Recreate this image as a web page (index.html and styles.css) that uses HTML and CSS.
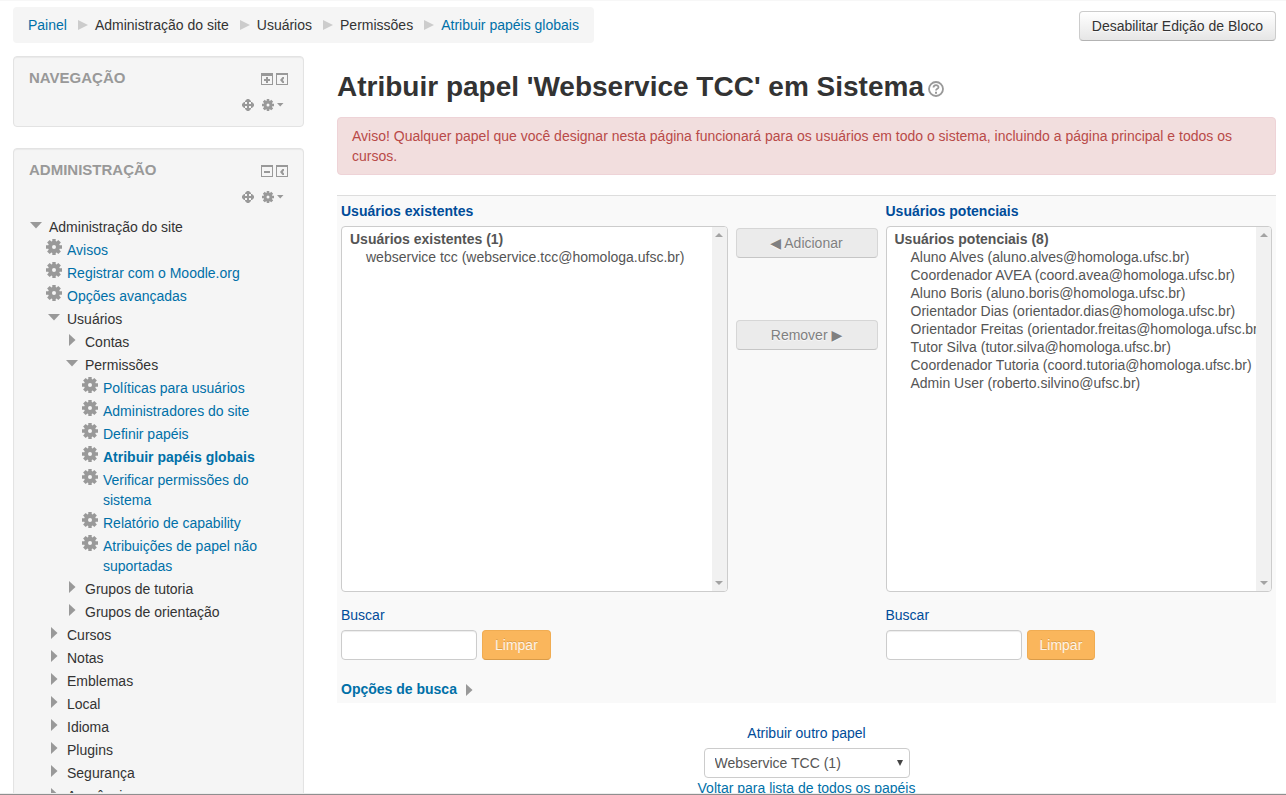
FILE: index.html
```html
<!DOCTYPE html>
<html lang="pt-br">
<head>
<meta charset="utf-8">
<title>Atribuir papéis globais</title>
<link rel="stylesheet" href="styles.css">
</head>
<body>
<svg class="sprite" aria-hidden="true">
  <symbol id="gear" viewBox="0 0 16 16"><path fill-rule="evenodd" d="M6.300 0h3.400v2.100l.9.400 1.700-1.500 2.600 2.500-1.600 1.700.4 1H16v3.600h-2.300l-.4 1 1.600 1.700-2.600 2.500-1.700-1.500-.9.400V16H6.300v-2.100l-.9-.4L3.700 15l-2.600-2.500 1.600-1.700-.4-1H0V6.200h2.300l.4-1L1.100 3.500 3.700 1l1.700 1.500.9-.4zM8 6a2 2 0 1 0 0 4a2 2 0 1 0 0-4z"/></symbol>
  <symbol id="down" viewBox="0 0 16 16"><path d="M2 6h12L8 12.500z"/></symbol>
  <symbol id="right" viewBox="0 0 16 16"><path d="M5 3l6.500 6L5 15z"/></symbol>
  <symbol id="move" viewBox="0 0 12 12"><path d="M5 0h2l2 2v1H7v2h2V3h1l2 2v2l-2 2H9V7H7v2h2v1l-2 2H5l-2-2V9h2V7H3v2H2L0 7V5l2-2h1v2h2V3H3V2z"/></symbol>
  <symbol id="caret" viewBox="0 0 8 12"><path d="M1 4h6.500L4.200 7.500z"/></symbol>
  <symbol id="plusbox" viewBox="0 0 12 12"><path fill-rule="evenodd" d="M0 0h12v12H0zM1 3v8h10V3z"/><path d="M5 4h2v2h2v2H7v2H5V8H3V6h2z"/></symbol>
  <symbol id="minusbox" viewBox="0 0 12 12"><path fill-rule="evenodd" d="M0 0h12v12H0zM1 2v9h10V2z"/><path d="M3 6h6v2H3z"/></symbol>
  <symbol id="dockbox" viewBox="0 0 12 12"><path fill-rule="evenodd" d="M0 0h12v12H0zM1 2v9h10V2z"/><path d="M8 4v1.500L6.800 7 8 8.500V10H6.500L4 7l2.500-3z"/></symbol>
  <symbol id="help" viewBox="0 0 16 16"><circle cx="8" cy="8" r="7" fill="none" stroke="currentColor" stroke-width="1.800"/><path d="M5.500 6.600C5.500 3.500 10.500 3.500 10.500 6.200C10.500 7.900 8 7.800 8 9.600" fill="none" stroke="currentColor" stroke-width="1.800"/><path d="M7 10.800h2v1.900H7z"/></symbol>
  <symbol id="sbup" viewBox="0 0 8 8"><path d="M0 6h8L4 2z"/></symbol>
  <symbol id="sbdown" viewBox="0 0 8 8"><path d="M0 2h8L4 6z"/></symbol>
</svg>

<div class="page">
  <header class="topbar">
    <nav class="breadcrumb" aria-label="Trilha">
      <a href="#">Painel</a><span class="sep" aria-hidden="true"></span>
      <span>Administração do site</span><span class="sep" aria-hidden="true"></span>
      <span>Usuários</span><span class="sep" aria-hidden="true"></span>
      <span>Permissões</span><span class="sep" aria-hidden="true"></span>
      <a href="#">Atribuir papéis globais</a>
    </nav>
    <button class="btn btn-edit" type="button">Desabilitar Edição de Bloco</button>
  </header>

  <div class="columns">
    <aside class="sidebar">
      <section class="block">
        <div class="block-head">
          <h2>Navegação</h2>
          <div class="box-tools">
            <button type="button" class="tool" aria-label="Expandir"><svg class="i12"><use href="#plusbox"/></svg></button>
            <button type="button" class="tool" aria-label="Encaixar"><svg class="i12"><use href="#dockbox"/></svg></button>
          </div>
        </div>
        <div class="edit-tools">
          <button type="button" class="tool" aria-label="Mover"><svg class="i12"><use href="#move"/></svg></button>
          <button type="button" class="tool" aria-label="Ações"><svg class="i12"><use href="#gear"/></svg><svg class="icaret"><use href="#caret"/></svg></button>
        </div>
      </section>

      <section class="block">
        <div class="block-head">
          <h2>Administração</h2>
          <div class="box-tools">
            <button type="button" class="tool" aria-label="Recolher"><svg class="i12"><use href="#minusbox"/></svg></button>
            <button type="button" class="tool" aria-label="Encaixar"><svg class="i12"><use href="#dockbox"/></svg></button>
          </div>
        </div>
        <div class="edit-tools">
          <button type="button" class="tool" aria-label="Mover"><svg class="i12"><use href="#move"/></svg></button>
          <button type="button" class="tool" aria-label="Ações"><svg class="i12"><use href="#gear"/></svg><svg class="icaret"><use href="#caret"/></svg></button>
        </div>
        <ul class="tree">
          <li><p class="node"><svg><use href="#down"/></svg><span>Administração do site</span></p>
            <ul>
              <li><p class="node"><svg><use href="#gear"/></svg><a href="#">Avisos</a></p></li>
              <li><p class="node"><svg><use href="#gear"/></svg><a href="#">Registrar com o Moodle.org</a></p></li>
              <li><p class="node"><svg><use href="#gear"/></svg><a href="#">Opções avançadas</a></p></li>
              <li><p class="node"><svg><use href="#down"/></svg><span>Usuários</span></p>
                <ul>
                  <li><p class="node"><svg><use href="#right"/></svg><span>Contas</span></p></li>
                  <li><p class="node"><svg><use href="#down"/></svg><span>Permissões</span></p>
                    <ul>
                      <li><p class="node"><svg><use href="#gear"/></svg><a href="#">Políticas para usuários</a></p></li>
                      <li><p class="node"><svg><use href="#gear"/></svg><a href="#">Administradores do site</a></p></li>
                      <li><p class="node"><svg><use href="#gear"/></svg><a href="#">Definir papéis</a></p></li>
                      <li><p class="node"><svg><use href="#gear"/></svg><a class="current" href="#" aria-current="page">Atribuir papéis globais</a></p></li>
                      <li><p class="node"><svg><use href="#gear"/></svg><a href="#">Verificar permissões do sistema</a></p></li>
                      <li><p class="node"><svg><use href="#gear"/></svg><a href="#">Relatório de capability</a></p></li>
                      <li><p class="node"><svg><use href="#gear"/></svg><a href="#">Atribuições de papel não suportadas</a></p></li>
                    </ul>
                  </li>
                  <li><p class="node"><svg><use href="#right"/></svg><span>Grupos de tutoria</span></p></li>
                  <li><p class="node"><svg><use href="#right"/></svg><span>Grupos de orientação</span></p></li>
                </ul>
              </li>
              <li><p class="node"><svg><use href="#right"/></svg><span>Cursos</span></p></li>
              <li><p class="node"><svg><use href="#right"/></svg><span>Notas</span></p></li>
              <li><p class="node"><svg><use href="#right"/></svg><span>Emblemas</span></p></li>
              <li><p class="node"><svg><use href="#right"/></svg><span>Local</span></p></li>
              <li><p class="node"><svg><use href="#right"/></svg><span>Idioma</span></p></li>
              <li><p class="node"><svg><use href="#right"/></svg><span>Plugins</span></p></li>
              <li><p class="node"><svg><use href="#right"/></svg><span>Segurança</span></p></li>
              <li><p class="node"><svg><use href="#right"/></svg><span>Aparência</span></p></li>
            </ul>
          </li>
        </ul>
      </section>
    </aside>

    <main class="main">
      <h1>Atribuir papel 'Webservice TCC' em Sistema<svg class="help"><use href="#help"/></svg></h1>
      <p class="alert">Aviso! Qualquer papel que você designar nesta página funcionará para os usuários em todo o sistema, incluindo a página principal e todos os cursos.</p>

      <form class="picker">
        <div class="pick-col">
          <label class="title" for="existing">Usuários existentes</label>
          <div class="listbox">
            <select id="existing" multiple size="20">
              <optgroup label="Usuários existentes (1)">
                <option>webservice tcc (webservice.tcc@homologa.ufsc.br)</option>
              </optgroup>
            </select>
            <span class="scroll" aria-hidden="true"><svg><use href="#sbup"/></svg><svg><use href="#sbdown"/></svg></span>
          </div>
          <label class="search-label" for="search-existing">Buscar</label>
          <div class="search">
            <input id="search-existing" type="text">
            <button class="btn btn-warn" type="button" disabled>Limpar</button>
          </div>
          <a class="options" href="#">Opções de busca<svg><use href="#right"/></svg></a>
        </div>
        <div class="actions">
          <button class="btn" type="button" disabled><span class="glyph">◀</span> Adicionar</button>
          <button class="btn" type="button" disabled>Remover <span class="glyph">▶</span></button>
        </div>
        <div class="pick-col">
          <label class="title" for="potential">Usuários potenciais</label>
          <div class="listbox">
            <select id="potential" multiple size="20">
              <optgroup label="Usuários potenciais (8)">
                <option>Aluno Alves (aluno.alves@homologa.ufsc.br)</option>
                <option>Coordenador AVEA (coord.avea@homologa.ufsc.br)</option>
                <option>Aluno Boris (aluno.boris@homologa.ufsc.br)</option>
                <option>Orientador Dias (orientador.dias@homologa.ufsc.br)</option>
                <option>Orientador Freitas (orientador.freitas@homologa.ufsc.br)</option>
                <option>Tutor Silva (tutor.silva@homologa.ufsc.br)</option>
                <option>Coordenador Tutoria (coord.tutoria@homologa.ufsc.br)</option>
                <option>Admin User (roberto.silvino@ufsc.br)</option>
              </optgroup>
            </select>
            <span class="scroll" aria-hidden="true"><svg><use href="#sbup"/></svg><svg><use href="#sbdown"/></svg></span>
          </div>
          <label class="search-label" for="search-potential">Buscar</label>
          <div class="search">
            <input id="search-potential" type="text">
            <button class="btn btn-warn" type="button" disabled>Limpar</button>
          </div>
        </div>
      </form>

      <div class="other-role">
        <label for="role">Atribuir outro papel</label>
        <div class="role-select">
          <select id="role"><option>Webservice TCC (1)</option></select>
          <span class="arrow" aria-hidden="true"></span>
        </div>
        <a href="#">Voltar para lista de todos os papéis</a>
      </div>
    </main>
  </div>
</div>
</body>
</html>
```
FILE: styles.css
```css
* { box-sizing: border-box; }

body {
  margin: 0;
  height: 100vh;
  overflow: hidden;
  border-top: 1px solid #f7f7f7;
  border-bottom: 1px solid #8f8f8f;
  background: #fff;
  color: #333;
  font: 14px/20px "Liberation Sans", Arial, sans-serif;
}

h1, h2, p, ul { margin: 0; padding: 0; }
ul { list-style: none; }
a { color: #0070a8; text-decoration: none; }
svg { fill: currentColor; flex: none; display: block; }
button, input, select { font: inherit; margin: 0; }

.sprite { display: none; }

.page {
  height: 100%;
  overflow: hidden;
  padding: 6px 10px 0 13px;
  border-bottom: 1px solid #ededed;
}

.topbar {
  display: flex;
  justify-content: space-between;
  align-items: flex-start;
}

.breadcrumb {
  display: flex;
  align-items: center;
  padding: 8px 15px;
  border-radius: 4px;
  background: #f5f5f5;
}
.sep {
  margin: 0 7px 0 11px;
  border: solid transparent;
  border-width: 5px 0 5px 10px;
  border-left-color: #ccc;
}

.btn {
  height: 30px;
  padding: 4px 12px;
  border: 1px solid #ccc;
  border-bottom-color: #b3b3b3;
  border-radius: 4px;
  background: #f5f5f5 linear-gradient(#fff, #e6e6e6);
  color: #333;
  line-height: 20px;
  text-shadow: 0 1px 1px rgba(255, 255, 255, .75);
}
.btn:disabled { background: #ebebeb; border-color: #d6d6d6; border-bottom-color: #c6c6c6; color: #808080; }
.btn-edit { margin-top: 4px; }
.btn.btn-warn:disabled {
  border-color: #f0ac52;
  border-bottom-color: #d99b49;
  background: #fab65c;
  color: #fdf3e6;
  text-shadow: 0 -1px 0 rgba(0, 0, 0, .15);
}
.glyph { font-family: "DejaVu Sans", sans-serif; }

.columns {
  display: grid;
  grid-template-columns: 291px minmax(0, 1fr);
  gap: 33px;
  margin-top: 13px;
}

.sidebar { display: flex; flex-direction: column; gap: 21px; }
.block {
  padding: 11px 15px 15px;
  border: 1px solid #e3e3e3;
  border-radius: 4px;
  background: #f5f5f5;
  box-shadow: inset 0 1px 1px rgba(0, 0, 0, .05);
}
.block-head { display: flex; justify-content: space-between; }
.block-head h2 {
  color: #999;
  font-size: 15px;
  line-height: 20px;
  text-transform: uppercase;
}
.box-tools { display: flex; gap: 3px; padding-top: 5px; }
.edit-tools { display: flex; justify-content: flex-end; gap: 8px; padding: 11px 4px 0 0; }
.tool { display: flex; gap: 2px; padding: 0; border: 0; background: none; color: #999; }
.i12 { width: 12px; height: 12px; }
.icaret { width: 8px; height: 12px; }

.tree { padding-top: 14px; }
.tree ul { padding-left: 18px; }
.node { display: flex; gap: 5px; padding-bottom: 3px; margin-left: -1px; }
.node svg { width: 16px; height: 16px; margin-top: -1px; color: #999; }
.current { font-weight: bold; }

.main { padding-top: 11px; }
h1 {
  display: flex;
  align-items: center;
  gap: 4px;
  font-size: 28px;
  line-height: 40px;
}
.help { width: 16px; height: 16px; margin-top: 4px; color: #999; }
.alert {
  margin-top: 10px;
  padding: 8px 35px 8px 14px;
  border: 1px solid #eed3d7;
  border-radius: 4px;
  background: #f2dede;
  color: #b94a48;
}

.picker {
  display: grid;
  grid-template-columns: minmax(0, 1fr) 142px minmax(0, 1fr);
  gap: 8px;
  margin-top: 20px;
  padding: 5px 4px 4px;
  border-top: 1px solid #ddd;
  background: #f9f9f9;
}
.pick-col { display: flex; flex-direction: column; align-items: flex-start; }
.title, .search-label, .other-role label { color: #004c99; }
.title { font-weight: bold; }
.listbox {
  display: flex;
  width: 100%;
  height: 366px;
  margin-top: 5px;
  border: 1px solid #ccc;
  border-radius: 4px;
  background: #fff;
  overflow: hidden;
}
.listbox select {
  flex: 1;
  min-width: 0;
  padding: 4px 0 4px 6px;
  border: 0;
  outline: 0;
  background: none;
  color: #555;
}
.listbox option { min-height: 18px; padding: 0 0 2px 18px; }
.scroll {
  display: flex;
  flex-direction: column;
  justify-content: space-between;
  align-items: center;
  width: 15px;
  padding: 4px 0;
  background: #f1f1f1;
  color: #a3a3a3;
}
.scroll svg { width: 8px; height: 8px; }
.search-label { margin-top: 13px; }
.search { display: flex; gap: 5px; margin-top: 5px; }
.search input {
  width: 136px;
  height: 30px;
  padding: 4px 6px;
  border: 1px solid #ccc;
  border-radius: 4px;
  background: #fff;
  box-shadow: inset 0 1px 1px rgba(0, 0, 0, .075);
}
.options { display: flex; gap: 4px; margin-top: 19px; font-weight: bold; }
.options svg { width: 16px; height: 16px; margin-top: 2px; color: #999; }
.actions { display: flex; flex-direction: column; gap: 62px; padding-top: 27px; }

.other-role {
  display: flex;
  flex-direction: column;
  align-items: center;
  padding-top: 20px;
}
.role-select { display: grid; align-items: center; margin-top: 5px; }
.role-select select {
  grid-area: 1 / 1;
  width: 206px;
  height: 30px;
  padding: 4px 10px;
  border: 1px solid #ccc;
  border-radius: 4px;
  background: #fff;
  color: #555;
  appearance: none;
}
.arrow {
  grid-area: 1 / 1;
  justify-self: end;
  margin-right: 7px;
  border: solid transparent;
  border-width: 6px 3px 0;
  border-top-color: #444;
  pointer-events: none;
}
```
